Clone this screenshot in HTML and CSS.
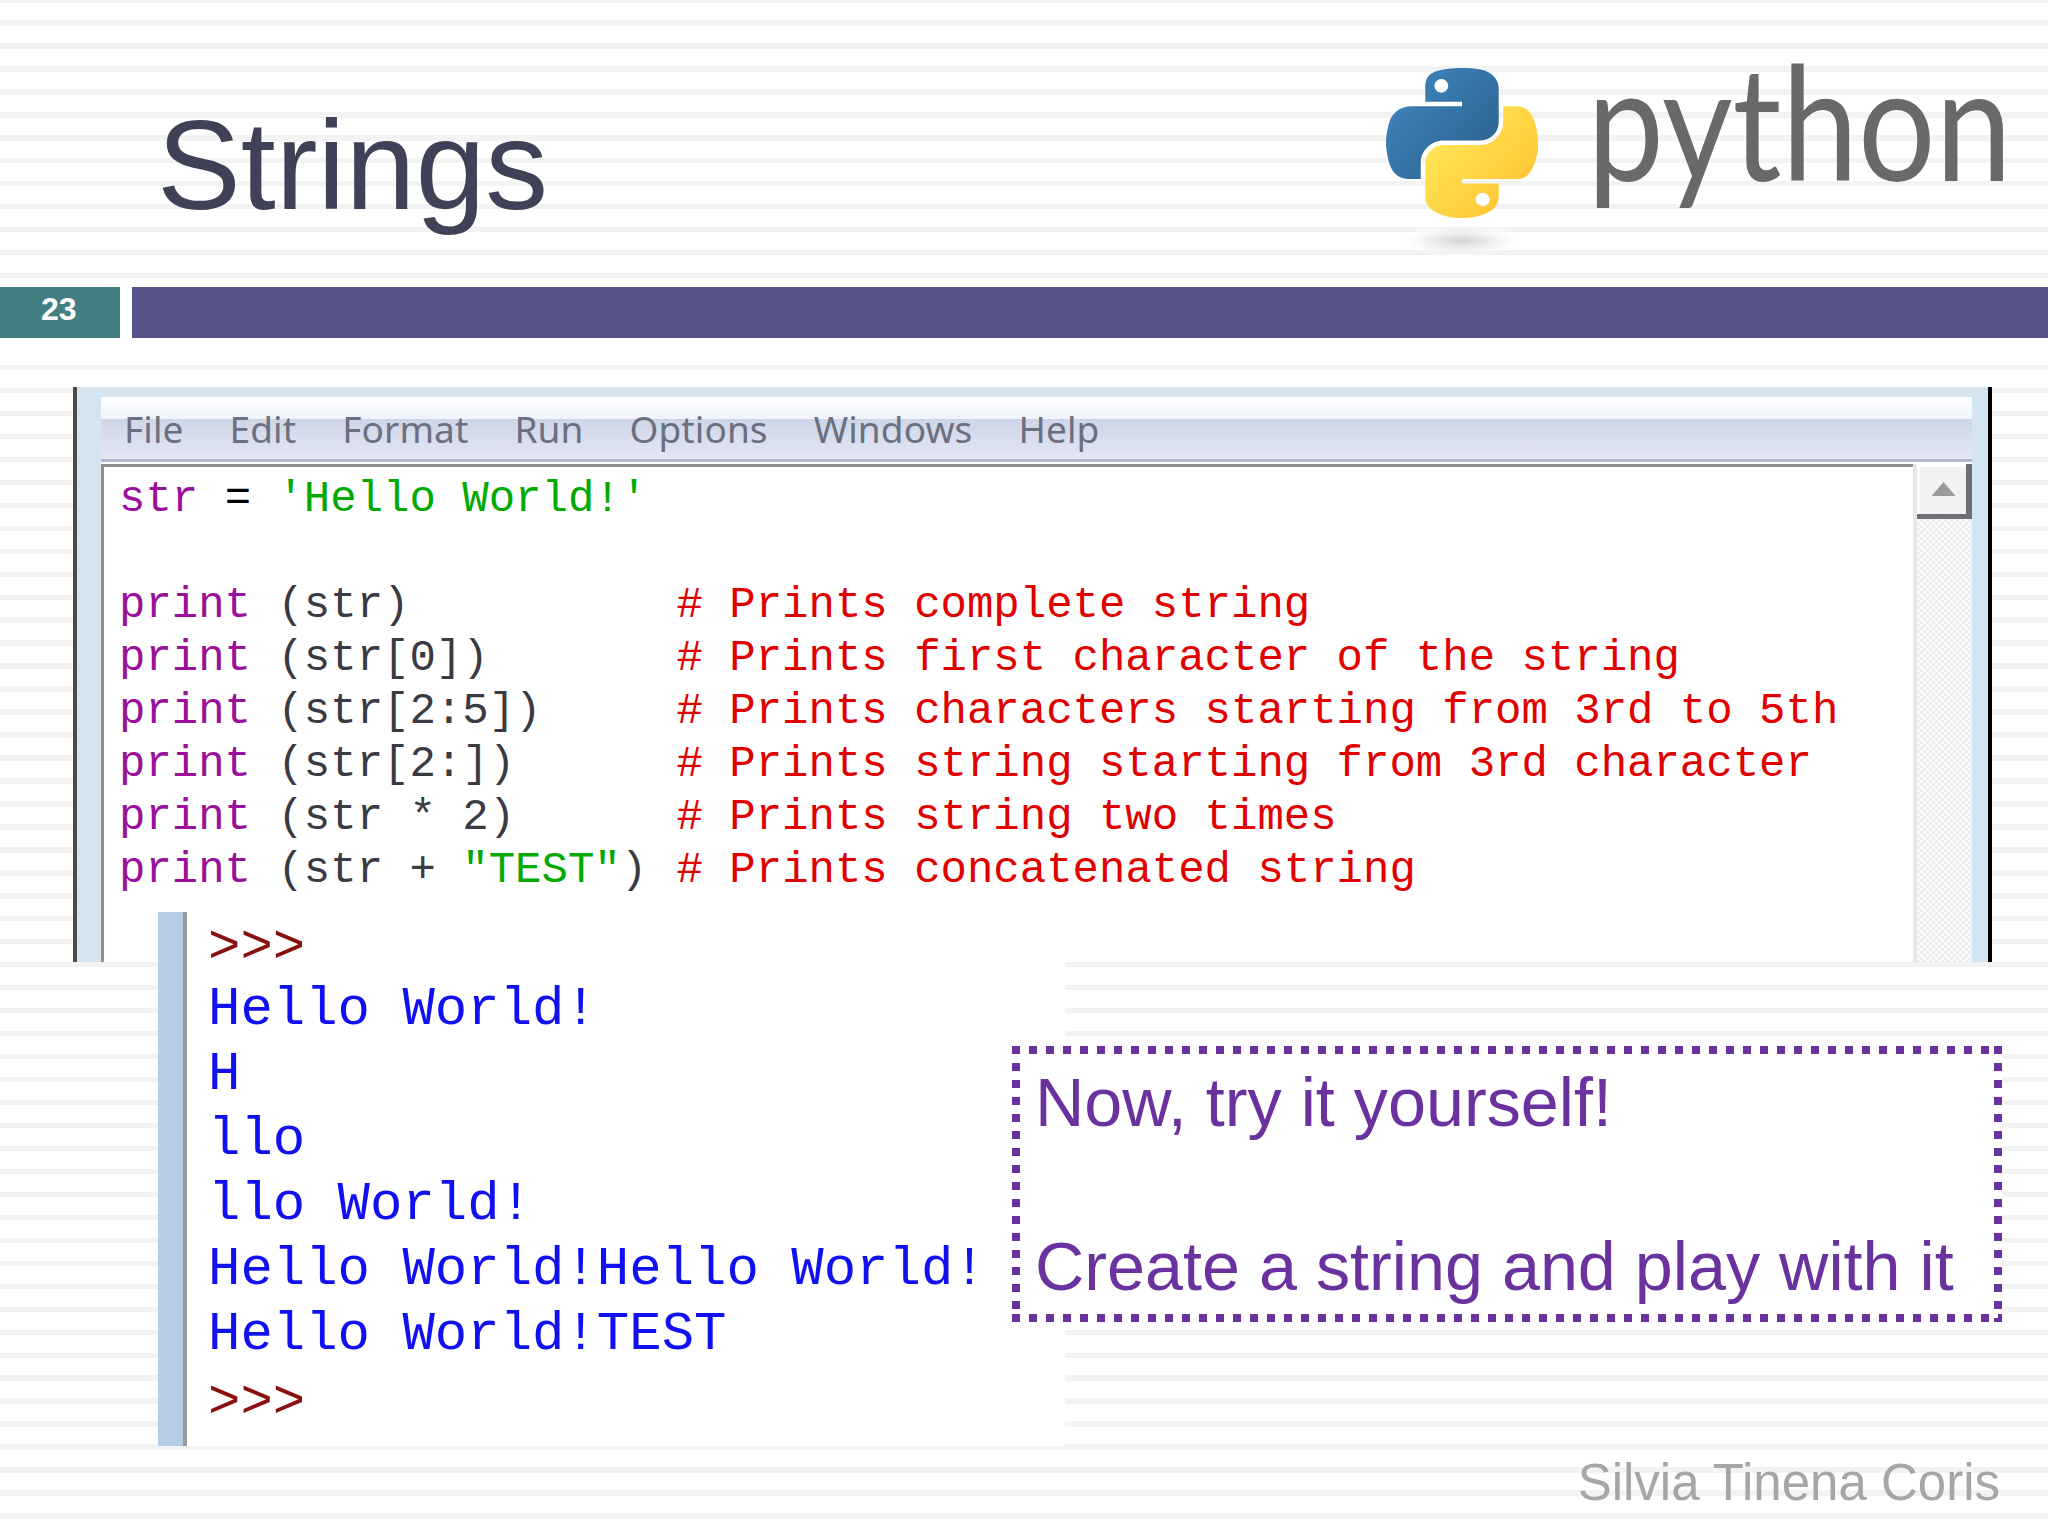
FILE: index.html
```html
<!DOCTYPE html>
<html lang="en">
<head>
<meta charset="utf-8">
<title>Strings</title>
<link rel="stylesheet" href="styles.css">
</head>
<body>
<div class="slide">
  <header class="head">
    <h1 class="title">Strings</h1>
    <div class="logo">
      <svg class="snake" viewBox="0 0 111 143" preserveAspectRatio="none" aria-hidden="true">
        <defs>
          <linearGradient id="blue" x1="0.1" y1="0.05" x2="0.85" y2="0.7">
            <stop offset="0" stop-color="#3f86bf"/>
            <stop offset="1" stop-color="#2f6797"/>
          </linearGradient>
          <linearGradient id="yellow" x1="0.25" y1="0.25" x2="0.9" y2="0.85">
            <stop offset="0" stop-color="#ffe253"/>
            <stop offset="1" stop-color="#ffc331"/>
          </linearGradient>
          <radialGradient id="shade">
            <stop offset="0" stop-color="#d2d2d2"/>
            <stop offset="0.5" stop-color="#ececec" stop-opacity="0.8"/>
            <stop offset="1" stop-color="#ffffff" stop-opacity="0"/>
          </radialGradient>
        </defs>
        <ellipse cx="55" cy="129.5" rx="48" ry="12" fill="url(#shade)"/>
        <path fill="url(#blue)" d="M54.9188,0.0009 C50.3351,0.0222 45.9578,0.4131 42.1063,1.0947 C30.7601,3.0992 28.7,7.2948 28.7,15.0322 L28.7,25.2509 L55.5125,25.2509 L55.5125,28.6572 L28.7,28.6572 L18.6375,28.6572 C10.8451,28.6572 4.0217,33.3409 1.8875,42.2509 C-0.574,52.463 -0.684,58.835 1.8875,69.5009 C3.7935,77.439 8.3447,83.094 16.137,83.094 L25.35,83.094 L25.35,70.844 C25.35,61.993 33.0085,54.188 42.1063,54.188 L68.8875,54.188 C76.3425,54.188 82.2938,48.049 82.2938,40.563 L82.2938,15.032 C82.2938,7.766 76.1638,2.308 68.8875,1.094 C64.2815,0.328 59.5025,-0.02 54.9188,0.0009 Z M40.4188,8.219 C43.1883,8.219 45.45,10.517 45.45,13.344 C45.45,16.16 43.1883,18.438 40.4188,18.438 C37.6393,18.438 35.3875,16.16 35.3875,13.344 C35.3875,10.517 37.6393,8.219 40.4188,8.219 Z"/>
        <path fill="url(#yellow)" d="M85.6375,28.657 L85.6375,40.563 C85.6375,49.794 77.8113,57.563 68.8875,57.563 L42.1063,57.563 C34.7706,57.563 28.7,63.841 28.7,71.188 L28.7,96.719 C28.7,103.985 35.0181,108.259 42.1063,110.344 C50.5938,112.84 58.7329,113.291 68.8875,110.344 C75.6375,108.389 82.2938,104.456 82.2938,96.719 L82.2938,86.5 L55.5125,86.5 L55.5125,83.094 L82.2938,83.094 L95.7,83.094 C103.493,83.094 106.397,77.658 109.106,69.5 C111.906,61.102 111.787,53.025 109.106,42.25 C107.181,34.492 103.504,28.657 95.7,28.657 L85.6375,28.657 Z M70.575,93.313 C73.3545,93.313 75.6063,95.591 75.6063,98.407 C75.6063,101.234 73.3545,103.532 70.575,103.532 C67.8055,103.532 65.5438,101.234 65.5438,98.407 C65.5438,95.591 67.8055,93.313 70.575,93.313 Z"/>
      </svg>
      <span class="wordmark">python</span>
    </div>
  </header>

  <div class="band">
    <div class="num">23</div>
    <div class="bar"></div>
  </div>

  <section class="window">
    <nav class="menu">
      <span>File</span><span>Edit</span><span>Format</span><span>Run</span><span>Options</span><span>Windows</span><span>Help</span>
    </nav>
    <div class="editor">
      <div class="code">
        <div class="ln"><span class="v">str</span> <span class="k">=</span> <span class="s">'Hello World!'</span></div>
        <div class="ln"> </div>
        <div class="ln"><span class="b">print</span> (str)          <span class="c"># Prints complete string</span></div>
        <div class="ln"><span class="b">print</span> (str[0])       <span class="c"># Prints first character of the string</span></div>
        <div class="ln"><span class="b">print</span> (str[2:5])     <span class="c"># Prints characters starting from 3rd to 5th</span></div>
        <div class="ln"><span class="b">print</span> (str[2:])      <span class="c"># Prints string starting from 3rd character</span></div>
        <div class="ln"><span class="b">print</span> (str * 2)      <span class="c"># Prints string two times</span></div>
        <div class="ln"><span class="b">print</span> (str + <span class="s">"TEST"</span>) <span class="c"># Prints concatenated string</span></div>
      </div>
      <div class="scroll">
        <div class="scroll-btn"><i class="arrow"></i></div>
        <div class="trough"></div>
      </div>
    </div>
  </section>

  <section class="output">
    <div class="gutter"></div>
    <div class="out-text">
      <div class="prompt">&gt;&gt;&gt;</div>
      <div>Hello World!</div>
      <div>H</div>
      <div>llo</div>
      <div>llo World!</div>
      <div>Hello World!Hello World!</div>
      <div>Hello World!TEST</div>
      <div class="prompt">&gt;&gt;&gt;</div>
    </div>
  </section>

  <aside class="try">
    <p class="try-line">Now, try it yourself!</p>
    <p class="try-line">Create a string and play with it</p>
  </aside>

  <footer class="foot">Silvia Tinena Coris</footer>
</div>
</body>
</html>
```

FILE: styles.css
```css
* { box-sizing: border-box; }
html, body { margin: 0; padding: 0; background: #fff; }

.slide {
  position: relative;
  width: 2048px;
  height: 1536px;
  overflow: hidden;
  display: flex;
  flex-direction: column;
  font-family: "Liberation Sans", Arial, sans-serif;
  background: repeating-linear-gradient(to bottom,
    #f3f3f4 0, #f3f3f4 2.7px,
    #ffffff 2.7px, #ffffff 20.27px,
    #f3f3f4 20.27px, #f3f3f4 22.97px);
}

/* header */
.head {
  height: 278px;
  flex: none;
  display: flex;
  justify-content: space-between;
  padding: 0 36px 0 157px;
}
.title {
  margin: 104px 0 0;
  font-size: 125.7px;
  line-height: 124px;
  font-weight: 400;
  color: #3f4156;
}
.logo {
  display: flex;
  align-items: flex-start;
  gap: 2px;
  padding-top: 68px;
}
.snake { width: 152px; height: 191px; flex: none; }
.wordmark {
  font-family: "Lato", sans-serif;
  font-size: 152px;
  line-height: 152px;
  color: #696969;
  margin-top: -25px;
  transform: scale(0.9, 1.05);
  transform-origin: right center;
}

/* number and bar */
.band {
  height: 84px;
  flex: none;
  display: flex;
  gap: 12px;
  padding-top: 9px;
  background: #fff;
}
.num {
  width: 120px;
  height: 51px;
  padding-left: 41px;
  background: #437e83;
  color: #fff;
  font-size: 32px;
  line-height: 44px;
  font-weight: 700;
}
.bar { flex: 1; height: 51px; background: #55528a; }

/* IDLE window */
.window {
  flex: none;
  width: 1919px;
  height: 575px;
  margin: 25px 0 0 73px;
  padding: 10px 16px 0 24px;
  background: #d5e4f1;
  border-left: 4px solid #4a4a4a;
  border-right: 4px solid #000;
  display: flex;
  flex-direction: column;
}
.menu {
  height: 65px;
  flex: none;
  display: flex;
  gap: 46px;
  padding: 10px 0 0 23px;
  border-bottom: 3px solid #b5b8cc;
  background: linear-gradient(to bottom, #ffffff 0, #f0f3fd 35%, #cdd6e6 36%, #e4e7f4 100%);
  font-family: "Noto Sans", sans-serif;
  font-size: 37px;
  letter-spacing: 0.1px;
  line-height: 44px;
  color: #6b7080;
}
.editor {
  flex: 1;
  min-height: 0;
  display: flex;
  padding-top: 2px;
  background: #fff;
}
.code {
  flex: 1;
  padding: 6px 0 0 15px;
  border-top: 3px solid #8d908d;
  border-left: 3px solid #8d908d;
  font-family: "Liberation Mono", "Courier New", monospace;
  font-size: 44px;
  line-height: 53px;
  color: #3a3a44;
  background: #fff;
}
.ln { white-space: pre; height: 53px; }
.v, .b { color: #9a109a; }
.k { color: #000; }
.s { color: #00aa00; }
.c { color: #e00000; margin-left: 3px; }

.scroll {
  width: 59px;
  flex: none;
  display: flex;
  flex-direction: column;
  border-left: 4px solid #e6e7e8;
}
.scroll-btn {
  height: 55px;
  flex: none;
  display: flex;
  align-items: center;
  justify-content: center;
  padding-left: 4px;
  background: #f1f2f1;
  border-right: 6px solid #6e6f73;
  border-bottom: 5px solid #6e6f73;
  box-shadow: inset 3px 3px 0 #fff;
}
.arrow {
  display: block;
  width: 24px;
  height: 14px;
  background: #9a9c9a;
  clip-path: polygon(50% 0, 100% 100%, 0 100%);
}
.trough {
  flex: 1;
  background: repeating-conic-gradient(#ececf0 0 25%, #fbfbfc 0 50%) 0 0 / 6px 6px;
}

/* output panel, lying over the window */
.output {
  position: absolute;
  left: 158px;
  top: 912px;
  width: 907px;
  height: 534px;
  display: flex;
  background: #fff;
}
.gutter {
  width: 29px;
  flex: none;
  background: #b5cde6;
  border-right: 4px solid #9a9a9a;
}
.out-text {
  padding: 0 0 0 21px;
  font-family: "Liberation Mono", "Courier New", monospace;
  font-size: 54px;
  line-height: 65px;
  color: #1010f0;
}
.out-text div { white-space: pre; }
.out-text .prompt { color: #8a0f0f; padding-top: 3px; margin-bottom: -3px; }

/* dotted call-out, lying over the output panel */
.try {
  position: absolute;
  left: 1012px;
  top: 1046px;
  width: 990px;
  height: 276px;
  padding: 15px 0 0 23px;
  color: #6a329f;
  font-size: 68.3px;
  line-height: 82px;
  display: flex;
  flex-direction: column;
  gap: 82px;
  background-color: #fff;
  background-image:
    repeating-linear-gradient(to right, #6a329f 0 8px, transparent 8px 17px),
    repeating-linear-gradient(to right, #6a329f 0 8px, transparent 8px 17px),
    repeating-linear-gradient(to bottom, #6a329f 0 8px, transparent 8px 17px),
    repeating-linear-gradient(to bottom, #6a329f 0 8px, transparent 8px 17px);
  background-size: 100% 8px, 100% 8px, 8px 100%, 8px 100%;
  background-position: 0 0, 0 100%, 0 0, 100% 0;
  background-repeat: no-repeat;
}
.try-line { margin: 0; white-space: nowrap; }

/* author */
.foot {
  margin-top: auto;
  padding: 0 48px 23px 0;
  text-align: right;
  font-size: 51px;
  line-height: 60px;
  color: #a6a6a6;
}
```
